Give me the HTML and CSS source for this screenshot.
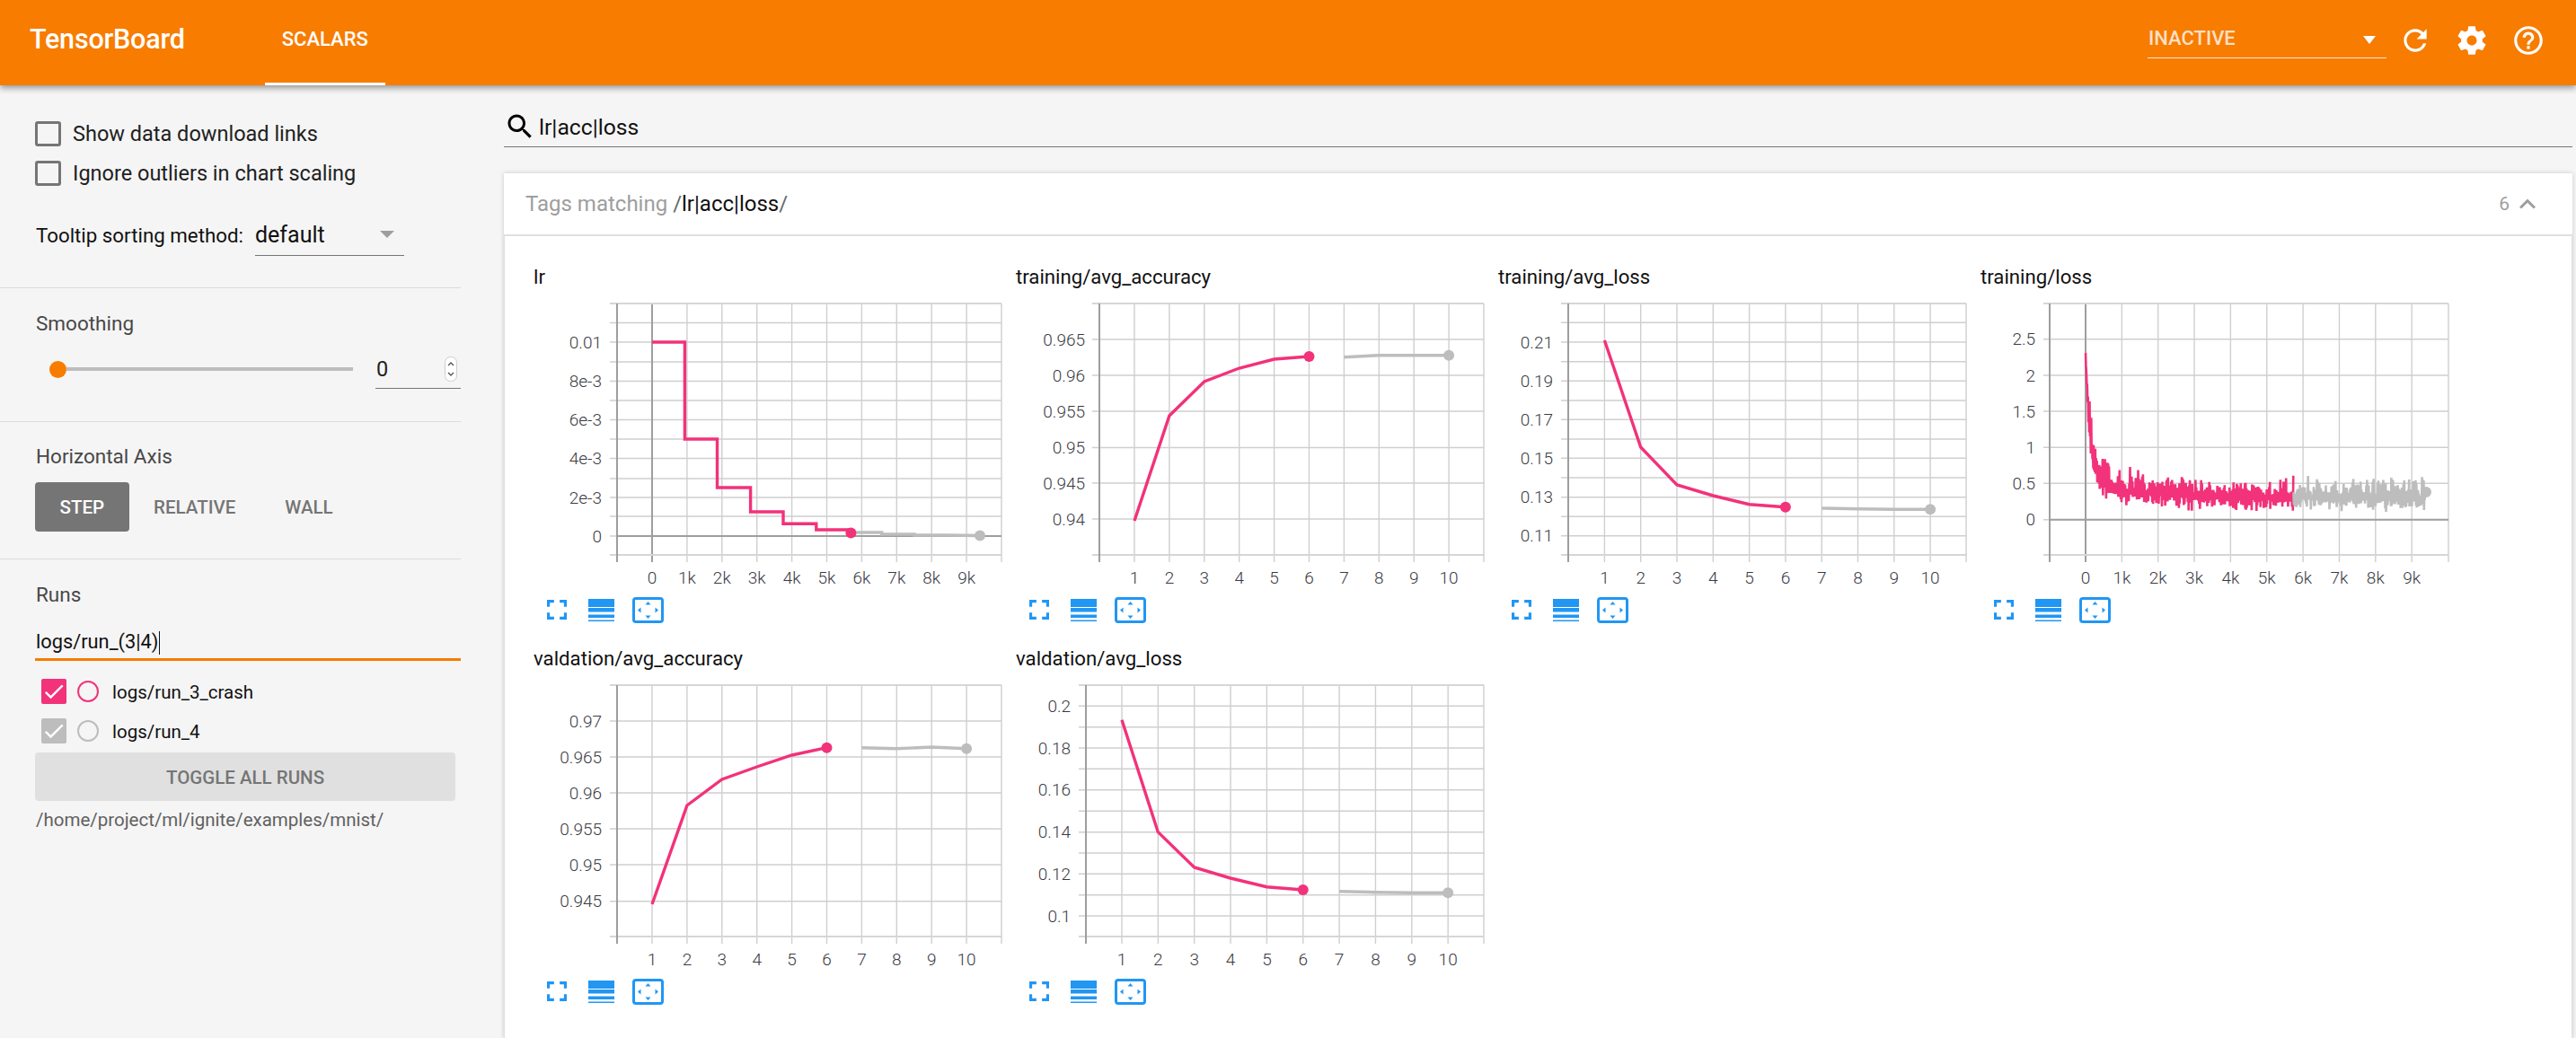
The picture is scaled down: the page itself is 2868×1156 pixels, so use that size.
FILE: index.html
```html
<!DOCTYPE html>
<html>

<head>
  <meta charset="utf-8">
  <title>TensorBoard</title>
  <link rel="stylesheet" href="styles.css">
  <script src="charts.js" defer></script>
</head>

<body>
  <div class="toolbar">
    <div class="brand">TensorBoard</div>
    <div class="tab">SCALARS</div>
    <div class="toolbar-space"></div>
    <div class="run-state">
      <span>INACTIVE</span>
      <span class="state-arrow"></span>
    </div>
    <div class="tool-icon">
      <svg viewBox="0 0 24 24"><path d="M17.65 6.35C16.2 4.9 14.21 4 12 4c-4.42 0-7.99 3.58-7.99 8s3.57 8 7.99 8c3.73 0 6.84-2.55 7.73-6h-2.08c-.82 2.33-3.04 4-5.65 4-3.31 0-6-2.69-6-6s2.69-6 6-6c1.66 0 3.14.69 4.22 1.78L13 11h7V4l-2.35 2.35z"/></svg>
    </div>
    <div class="tool-icon">
      <svg viewBox="0 0 24 24"><path d="M19.43 12.98c.04-.32.07-.64.07-.98s-.03-.66-.07-.98l2.11-1.65c.19-.15.24-.42.12-.64l-2-3.46c-.12-.22-.39-.3-.61-.22l-2.49 1c-.52-.4-1.08-.73-1.69-.98l-.38-2.65C14.46 2.18 14.25 2 14 2h-4c-.25 0-.46.18-.49.42l-.38 2.65c-.61.25-1.17.59-1.69.98l-2.49-1c-.23-.09-.49 0-.61.22l-2 3.46c-.13.22-.07.49.12.64l2.11 1.65c-.04.32-.07.65-.07.98s.03.66.07.98l-2.11 1.65c-.19.15-.24.42-.12.64l2 3.46c.12.22.39.3.61.22l2.49-1c.52.4 1.08.73 1.69.98l.38 2.65c.03.24.24.42.49.42h4c.25 0 .46-.18.49-.42l.38-2.65c.61-.25 1.17-.59 1.69-.98l2.49 1c.23.09.49 0 .61-.22l2-3.46c.12-.22.07-.49-.12-.64l-2.11-1.65zM12 15.5c-1.93 0-3.5-1.57-3.5-3.5s1.57-3.5 3.5-3.5 3.5 1.57 3.5 3.5-1.57 3.5-3.5 3.5z"/></svg>
    </div>
    <div class="tool-icon">
      <svg viewBox="0 0 24 24"><path d="M11 18h2v-2h-2v2zm1-16C6.48 2 2 6.48 2 12s4.48 10 10 10 10-4.48 10-10S17.52 2 12 2zm0 18c-4.41 0-8-3.59-8-8s3.59-8 8-8 8 3.59 8 8-3.59 8-8 8zm0-14c-2.21 0-4 1.79-4 4h2c0-1.1.9-2 2-2s2 .9 2 2c0 2-3 1.75-3 5h2c0-2.25 3-2.5 3-5 0-2.21-1.79-4-4-4z"/></svg>
    </div>
  </div>

  <div class="page">
    <div class="sidebar">
      <!-- options -->
      <div class="section section-options">
        <div class="check-row"><span class="box"></span>Show data download links</div>
        <div class="check-row"><span class="box"></span>Ignore outliers in chart scaling</div>
        <div class="sort-row">
          <span class="sort-label">Tooltip sorting method:</span>
          <div class="sort-select">
            <span>default</span>
            <span class="select-arrow"></span>
          </div>
        </div>
      </div>

      <div class="section section-smoothing">
        <div class="section-title">Smoothing</div>
        <div class="slider-row">
          <span class="slider-thumb"></span>
          <span class="slider-track"></span>
          <div class="slider-value">
            <span>0</span>
            <svg class="spinner" viewBox="0 0 14 28">
              <rect x="0.5" y="0.5" width="13" height="27" rx="6" fill="#fff" stroke="#ccc"/>
              <path d="M4 10l3-3 3 3M4 18l3 3 3-3" fill="none" stroke="#555" stroke-width="1.4"/>
            </svg>
          </div>
        </div>
      </div>

      <div class="section section-axis">
        <div class="section-title">Horizontal Axis</div>
        <div class="axis-buttons">
          <div class="axis-button active">STEP</div>
          <div class="axis-button">RELATIVE</div>
          <div class="axis-button">WALL</div>
        </div>
      </div>

      <div class="section section-runs">
        <div class="section-title">Runs</div>
        <div class="run-filter">logs/run_(3|4)<span class="caret"></span></div>
        <div class="run-list">
          <div class="run-row">
            <span class="run-check pink">
              <svg viewBox="0 0 24 24"><path d="M9 16.17L4.83 12l-1.42 1.41L9 19 21 7l-1.41-1.41z"/></svg>
            </span>
            <span class="run-dot pink"></span>
            <span class="run-name">logs/run_3_crash</span>
          </div>
          <div class="run-row">
            <span class="run-check grey">
              <svg viewBox="0 0 24 24"><path d="M9 16.17L4.83 12l-1.42 1.41L9 19 21 7l-1.41-1.41z"/></svg>
            </span>
            <span class="run-dot grey"></span>
            <span class="run-name">logs/run_4</span>
          </div>
        </div>
        <div class="toggle-runs">TOGGLE ALL RUNS</div>
        <div class="log-path">/home/project/ml/ignite/examples/mnist/</div>
      </div>
    </div>

    <div class="main">
      <div class="tag-search">
        <svg viewBox="0 0 24 24"><path d="M15.5 14h-.79l-.28-.27C15.41 12.59 16 11.11 16 9.5 16 5.91 13.09 3 9.5 3S3 5.91 3 9.5 5.91 16 9.5 16c1.61 0 3.09-.59 4.23-1.57l.27.28v.79l5 4.99L20.49 19l-4.99-5zm-6 0C7.01 14 5 11.99 5 9.5S7.01 5 9.5 5 14 7.01 14 9.5 11.99 14 9.5 14z"/></svg>
        <span>lr|acc|loss</span>
      </div>

      <div class="pane">
        <div class="pane-header">
          <span class="pane-title">Tags matching <span class="pane-regex"><i>/</i>lr|acc|loss<i>/</i></span></span>
          <span class="pane-count">6</span>
          <svg class="pane-chevron" viewBox="6 8 12 7.41"><path d="M12 8l-6 6 1.41 1.41L12 10.83l4.59 4.58L18 14z"/></svg>
        </div>
        <!-- filled by charts.js -->
        <div class="chart-grid" id="charts"></div>
      </div>
    </div>
  </div>
</body>

</html>
```
FILE: styles.css
```css
* {
  box-sizing: border-box;
}

html,
body {
  margin: 0;
  height: 100%;
}

body {
  display: flex;
  flex-direction: column;
  height: 1156px;
  overflow: hidden;
  background-color: #f5f5f5;
  color: #212121;
  font-family: Roboto, "Liberation Sans", sans-serif;
  font-size: 23.5px;
}

/* top bar */
.toolbar {
  display: flex;
  flex: none;
  height: 95px;
  padding: 0 22px 0 33px;
  background-color: #f77c00;
  color: white;
  box-shadow: 0 3px 7px rgba(0, 0, 0, 0.4);
  position: relative;
  z-index: 1;
}

.brand {
  font-size: 30.5px;
  font-weight: 500;
  line-height: 88px;
  letter-spacing: -0.2px;
}

.tab {
  margin-left: 89px;
  padding: 0 19px;
  height: 95px;
  line-height: 88px;
  font-size: 22px;
  font-weight: 500;
  border-bottom: 3px solid white;
}

.toolbar-space {
  flex: 1;
}

.run-state {
  display: flex;
  justify-content: space-between;
  align-items: center;
  width: 266px;
  height: 40px;
  margin-top: 25px;
  padding: 0 12px 4px 1px;
  border-bottom: 1px solid #fde7d3;
  font-size: 22px;
  font-weight: 500;
  color: #fcdfc6;
}

.state-arrow {
  margin-top: 4px;
  border-left: 7px solid transparent;
  border-right: 7px solid transparent;
  border-top: 9px solid white;
}

.tool-icon {
  display: flex;
  justify-content: center;
  align-items: center;
  width: 63px;
  height: 90px;
}

.tool-icon svg {
  width: 38px;
  height: 38px;
  fill: white;
}

.page {
  display: flex;
  flex: 1;
  min-height: 0;
}

/* left column */
.sidebar {
  flex: none;
  width: 561px;
}

.section {
  width: 513px;
  border-bottom: 1px solid #dcdcdc;
}

.section-options {
  height: 226px;
  padding: 32px 0 0 39px;
}

.check-row {
  display: flex;
  align-items: center;
  gap: 13px;
  height: 44px;
}

.box {
  width: 29px;
  height: 28px;
  border: 3px solid #757575;
  border-radius: 3px;
}

.sort-row {
  display: flex;
  align-items: center;
  height: 46px;
  margin-top: 24px;
  padding-left: 1px;
  color: #111;
  font-size: 22.3px;
}

.sort-label {
  width: 244px;
}

.sort-select {
  display: flex;
  justify-content: space-between;
  align-items: center;
  width: 166px;
  height: 46px;
  padding: 2px 11px 3px 0;
  border-bottom: 1px solid #757575;
  font-size: 25px;
}

.select-arrow {
  border-left: 8px solid transparent;
  border-right: 8px solid transparent;
  border-top: 8px solid #9e9e9e;
}

.section-title {
  height: 28px;
  padding-left: 40px;
  line-height: 30px;
  font-size: 22.5px;
  color: #484848;
}

.section-smoothing {
  height: 149px;
  padding-top: 24px;
}

.slider-row {
  display: flex;
  align-items: center;
  height: 44px;
  margin-top: 16px;
  padding-left: 55px;
}

.slider-thumb {
  width: 19px;
  height: 19px;
  border-radius: 50%;
  background-color: #f77c00;
}

.slider-track {
  width: 319px;
  height: 4px;
  margin-right: 25px;
  background-color: #bdbdbd;
}

.slider-value {
  display: flex;
  justify-content: space-between;
  align-items: center;
  width: 95px;
  height: 44px;
  padding: 0 4px 0 1px;
  border-bottom: 1px solid #757575;
}

.spinner {
  width: 14px;
  height: 28px;
}

.section-axis {
  height: 153px;
  padding-top: 23px;
}

.axis-buttons {
  display: flex;
  margin: 16px 0 0 39px;
}

.axis-button {
  height: 55px;
  padding: 0 27.5px;
  line-height: 56px;
  font-size: 20.5px;
  font-weight: 500;
  color: #757575;
  border-radius: 4px;
}

.axis-button.active {
  background-color: #757575;
  color: white;
}

.section-runs {
  padding-top: 24px;
  border-bottom: 0;
}

.run-filter {
  height: 40px;
  margin: 21px 0 0 39px;
  padding-left: 1px;
  line-height: 37px;
  font-size: 21.8px;
  border-bottom: 3px solid #f77c00;
  color: #111;
}

.caret {
  display: inline-block;
  height: 26px;
  margin-left: 1px;
  vertical-align: middle;
  border-left: 1px solid #111;
}

.run-list {
  margin-top: 12px;
  font-size: 20.5px;
}

.run-row {
  display: flex;
  align-items: center;
  height: 44px;
  padding-left: 46px;
  color: #111;
}

.run-name {
  padding-top: 2px;
}

.run-check {
  display: flex;
  width: 28px;
  height: 28px;
  margin-right: 12px;
  border-radius: 2px;
}

.run-check svg {
  width: 28px;
  height: 28px;
  fill: white;
}

.run-check.pink {
  background-color: #f2327a;
}

.run-check.grey {
  background-color: #bdbdbd;
}

.run-dot {
  width: 24px;
  height: 24px;
  margin-right: 15px;
  border: 2px solid;
  border-radius: 50%;
}

.run-dot.pink {
  border-color: #f2327a;
}

.run-dot.grey {
  border-color: #bdbdbd;
}

.toggle-runs {
  width: 468px;
  height: 54px;
  margin: 2px 0 0 39px;
  line-height: 56px;
  text-align: center;
  font-size: 20.5px;
  font-weight: 500;
  color: #757575;
  background-color: #e0e0e0;
  border-radius: 4px;
}

.log-path {
  margin: 9px 0 0 40px;
  line-height: 24px;
  font-size: 20.5px;
  color: #616161;
}

/* right column */
.main {
  display: flex;
  flex-direction: column;
  flex: 1;
  min-width: 0;
  padding-right: 4px;
}

.tag-search {
  display: flex;
  align-items: center;
  gap: 3px;
  height: 37px;
  margin-top: 32px;
  padding-bottom: 8px;
  border-bottom: 1px solid #757575;
  font-size: 24.7px;
  color: #111;
}

.tag-search svg {
  width: 36px;
  height: 36px;
  flex: none;
}

.pane {
  display: flex;
  flex-direction: column;
  flex: 1;
  margin-top: 29px;
  background-color: white;
  box-shadow: 0 0 5px rgba(0, 0, 0, 0.18);
}

.pane-header {
  display: flex;
  align-items: center;
  flex: none;
  height: 70px;
  padding: 0 41px 0 24px;
  border-bottom: 2px solid #e0e0e0;
  font-size: 24px;
  color: #9e9e9e;
}

.pane-title {
  flex: 1;
}

.pane-regex {
  color: #111;
}

.pane-regex i {
  font-style: normal;
  color: #666;
}

.pane-count {
  font-size: 21px;
}

.pane-chevron {
  width: 18px;
  height: 12px;
  margin-left: 11px;
  fill: #9e9e9e;
}

.chart-grid {
  display: grid;
  grid-template-columns: repeat(4, 537px);
  grid-auto-rows: 425px;
  flex: 1;
  padding: 27px 0 0 15px;
  border-left: 1px solid #e0e0e0;
  border-right: 1px solid #e0e0e0;
}

/* chart cards */
.chart-title {
  height: 36px;
  padding-left: 17px;
  line-height: 36px;
  font-size: 22.2px;
  color: #111;
}

.chart-plot {
  display: block;
  width: 540px;
  height: 334px;
}

.grid-line {
  stroke: #cfcfcf;
  stroke-width: 1.4;
}

.edge-line {
  stroke: #d6d6d6;
  stroke-width: 2;
}

.zero-line {
  stroke: #9e9e9e;
  stroke-width: 2;
}

.tick-label {
  font-family: Roboto, "Liberation Sans", sans-serif;
  font-size: 19px;
  font-weight: 300;
  fill: #3a3a44;
  dominant-baseline: central;
}

.series {
  fill: none;
  stroke-width: 3.4;
  stroke-linejoin: miter;
}

.series.pink {
  stroke: #f2327a;
}

.series.grey {
  stroke: #bdbdbd;
}

.series.noisy {
  stroke-width: 2.6;
  stroke-linejoin: bevel;
}

.dot.pink {
  fill: #f2327a;
}

.dot.grey {
  fill: #bdbdbd;
}

.chart-tools {
  display: flex;
  align-items: center;
  height: 38px;
  padding-left: 32px;
}

.chart-tools svg {
  fill: #2196f3;
}

.tool-full {
  width: 22px;
  height: 22px;
  margin-right: 24px;
}

.tool-lines {
  width: 29px;
  height: 25px;
  margin-right: 20px;
}

.tool-fit {
  width: 35px;
  height: 29px;
}
```
FILE: charts.js
```js
// every y below is the pixel row of the value in the finished page
const COL_LEFT = [576, 1113, 1650, 2187];
const ROW_TOP = [326, 751];
const STEP_LABELS = ['1', '2', '3', '4', '5', '6', '7', '8', '9', '10'];
const K_LABELS = ['0', '1k', '2k', '3k', '4k', '5k', '6k', '7k', '8k', '9k'];

const CHARTS = [
  {
    title: 'lr', col: 0, row: 0,
    left: 678, axis: 686, right: 1114, tick0: 725, dx: 38.9, xLabels: K_LABELS, zeroX: true,
    labelRight: 669,
    yTicks: [['0.01', 381], ['8e-3', 424.5], ['6e-3', 467.5], ['4e-3', 510.5], ['2e-3', 554], ['0', 597]],
    minor: [359.5, 403, 446, 489, 533, 575],
    zeroY: 597,
    pink: [[725, 381], [761.4, 381], [761.4, 489], [797.5, 489], [797.5, 543], [834.6, 543], [834.6, 570], [871, 570], [871, 583.3], [907.8, 583.3], [907.8, 590], [946.4, 590]],
    grey: [[946.4, 593], [980.7, 593], [980.7, 595], [1017, 595], [1017, 596], [1053.5, 596], [1090, 596.5]],
    pinkDot: [946.4, 593.5],
    greyDot: [1090, 596.5]
  },
  {
    title: 'training/avg_accuracy', col: 1, row: 0,
    left: 1215, axis: 1223, right: 1651, tick0: 1262, dx: 38.9, xLabels: STEP_LABELS,
    labelRight: 1207,
    yTicks: [['0.965', 378], ['0.96', 418], ['0.955', 458], ['0.95', 498.5], ['0.945', 538], ['0.94', 578]],
    minor: [],
    pinkY: [580, 463, 425, 410, 400, 397],
    greyY: [397.7, 395.7, 395.7, 395.7]
  },
  {
    title: 'training/avg_loss', col: 2, row: 0,
    left: 1737, axis: 1745, right: 2188, tick0: 1785.4, dx: 40.3, xLabels: STEP_LABELS,
    labelRight: 1728,
    yTicks: [['0.21', 381], ['0.19', 424.3], ['0.17', 467.3], ['0.15', 510.3], ['0.13', 553.7], ['0.11', 596.7]],
    minor: [359.3, 402.7, 446, 489, 532, 575.3],
    pinkY: [379, 498, 540, 552, 561.7, 564.7],
    greyY: [566, 566.7, 567.3, 567.3]
  },
  {
    title: 'training/loss', col: 3, row: 0,
    left: 2274, axis: 2281, right: 2725, tick0: 2321, dx: 40.35, xLabels: K_LABELS, zeroX: true,
    labelRight: 2265,
    yTicks: [['2.5', 377.7], ['2', 418], ['1.5', 458], ['1', 498.3], ['0.5', 538.3], ['0', 578.7]],
    minor: [],
    zeroY: 578.7,
    noisy: true
  },
  {
    title: 'valdation/avg_accuracy', col: 0, row: 1,
    left: 678, axis: 686, right: 1114, tick0: 725, dx: 38.9, xLabels: STEP_LABELS,
    labelRight: 669,
    yTicks: [['0.97', 803], ['0.965', 843], ['0.96', 883], ['0.955', 923], ['0.95', 963], ['0.945', 1003.7]],
    minor: [],
    pinkY: [1007, 897, 868, 854, 841, 832.7],
    greyY: [832.7, 833.7, 832, 833.7]
  },
  {
    title: 'valdation/avg_loss', col: 1, row: 1,
    left: 1200, axis: 1208, right: 1651, tick0: 1248, dx: 40.35, xLabels: STEP_LABELS,
    labelRight: 1191,
    yTicks: [['0.2', 786.3], ['0.18', 833], ['0.16', 879.7], ['0.14', 926.7], ['0.12', 973.3], ['0.1', 1020]],
    minor: [809.7, 856.3, 903.3, 950, 996.7],
    pinkY: [801.7, 926.7, 966, 978, 987.7, 991],
    greyY: [992.7, 993.7, 994.3, 994.3]
  }
];

const TOOLS = `
  <div class="chart-tools">
    <svg class="tool-full" viewBox="5 5 14 14"><path d="M7 14H5v5h5v-2H7v-3zm-2-4h2V7h3V5H5v5zm12 7h-3v2h5v-5h-2v3zM14 5v2h3v3h2V5h-5z"/></svg>
    <svg class="tool-lines" viewBox="0 0 29 25"><rect width="29" height="9"/><rect y="10" width="29" height="4.5"/><rect y="17.5" width="29" height="3.5"/><rect y="23.5" width="29" height="1.5"/></svg>
    <svg class="tool-fit" viewBox="0 0 35 29">
      <rect x="1.5" y="1.5" width="32" height="26" rx="2.5" fill="none" stroke="#2196f3" stroke-width="3"/>
      <path d="M17.5 5l3 3.5h-6zM17.5 24l3-3.5h-6zM6 14.5l3.5-3v6zM29 14.5l-3.5-3v6z"/>
    </svg>
  </div>`;

function line(cls, x1, y1, x2, y2) {
  return `<line class="${cls}" x1="${x1}" y1="${y1}" x2="${x2}" y2="${y2}"/>`;
}

function polyline(cls, points) {
  const attr = points.map(p => p[0].toFixed(1) + ',' + p[1].toFixed(1)).join(' ');
  return `<polyline class="series ${cls}" points="${attr}"/>`;
}

function dot(cls, p) {
  return `<circle class="dot ${cls}" cx="${p[0]}" cy="${p[1]}" r="6"/>`;
}

/* fake noise for the raw loss curve, same picture each load */
let seed = 4711;
function rand() {
  seed = (seed * 16807) % 2147483647;
  return seed / 2147483647;
}

function lossPoints(chart, fromX, toX) {
  const points = [];
  let high = 0.1;
  let low = 0.1;
  let n = 0;
  for (let x = fromX; x <= toX; x += 0.45) {
    const step = (x - chart.tick0) / chart.dx * 1000;
    const base = 0.31 + 0.25 * Math.exp(-step / 1100) + 1.74 * Math.exp(-step / 130);
    // the edges of the band wander every few pixels, that gives the spikes
    if (n % 5 === 0) {
      high = 0.06 + rand() * 0.2;
      low = 0.06 + rand() * 0.1;
    }
    // go up and down in turn so the band comes out solid
    const scale = step < 40 ? 0.2 : Math.min(1 + base, 2);
    const value = n % 2 === 0 ? base + high * scale * rand() : base - low * scale * rand();
    n += 1;
    points.push([x, 578.7 - value * 80.4]);
  }
  return points;
}

function plot(chart) {
  const top = chart.row === 0 ? 338 : 763;
  const bottom = top + 280;
  const labelY = bottom + 25;
  let out = '';

  for (const y of chart.minor) {
    out += line('grid-line', chart.left, y, chart.right, y);
  }
  for (const tick of chart.yTicks) {
    out += line('grid-line', chart.left, tick[1], chart.right, tick[1]);
    out += `<text class="tick-label" x="${chart.labelRight}" y="${tick[1]}" text-anchor="end">${tick[0]}</text>`;
  }
  chart.xLabels.forEach((label, i) => {
    const x = chart.tick0 + i * chart.dx;
    out += line(chart.zeroX && i === 0 ? 'zero-line' : 'grid-line', x, top, x, bottom + 8);
    out += `<text class="tick-label" x="${x}" y="${labelY}" text-anchor="middle">${label}</text>`;
  });
  out += line('edge-line', chart.left, top, chart.right, top);
  out += line('edge-line', chart.left, bottom, chart.right, bottom);
  out += line('grid-line', chart.right, top, chart.right, bottom + 8);
  out += line('zero-line', chart.axis, top, chart.axis, bottom + 8);
  if (chart.zeroY) {
    out += line('zero-line', chart.axis, chart.zeroY, chart.right, chart.zeroY);
  }

  if (chart.noisy) {
    out += polyline('pink noisy', lossPoints(chart, chart.tick0, 2552.5));
    out += polyline('grey noisy', lossPoints(chart, 2552.5, 2699));
    out += dot('grey', [2700, 548]);
  } else if (chart.pinkY) {
    const tickX = i => chart.tick0 + i * chart.dx;
    out += polyline('pink', chart.pinkY.map((y, i) => [tickX(i), y]));
    out += polyline('grey', chart.greyY.map((y, i) => [tickX(i + 6), y]));
    out += dot('pink', [tickX(5), chart.pinkY[5]]);
    out += dot('grey', [tickX(9), chart.greyY[3]]);
  } else {
    out += polyline('pink', chart.pink);
    out += polyline('grey', chart.grey);
    out += dot('pink', chart.pinkDot);
    out += dot('grey', chart.greyDot);
  }
  return out;
}

const container = document.getElementById('charts');
for (const chart of CHARTS) {
  const viewBox = `${COL_LEFT[chart.col]} ${ROW_TOP[chart.row]} 540 334`;
  container.insertAdjacentHTML('beforeend', `
    <div class="chart-card">
      <div class="chart-title">${chart.title}</div>
      <svg class="chart-plot" viewBox="${viewBox}">${plot(chart)}</svg>
      ${TOOLS}
    </div>`);
}
```
